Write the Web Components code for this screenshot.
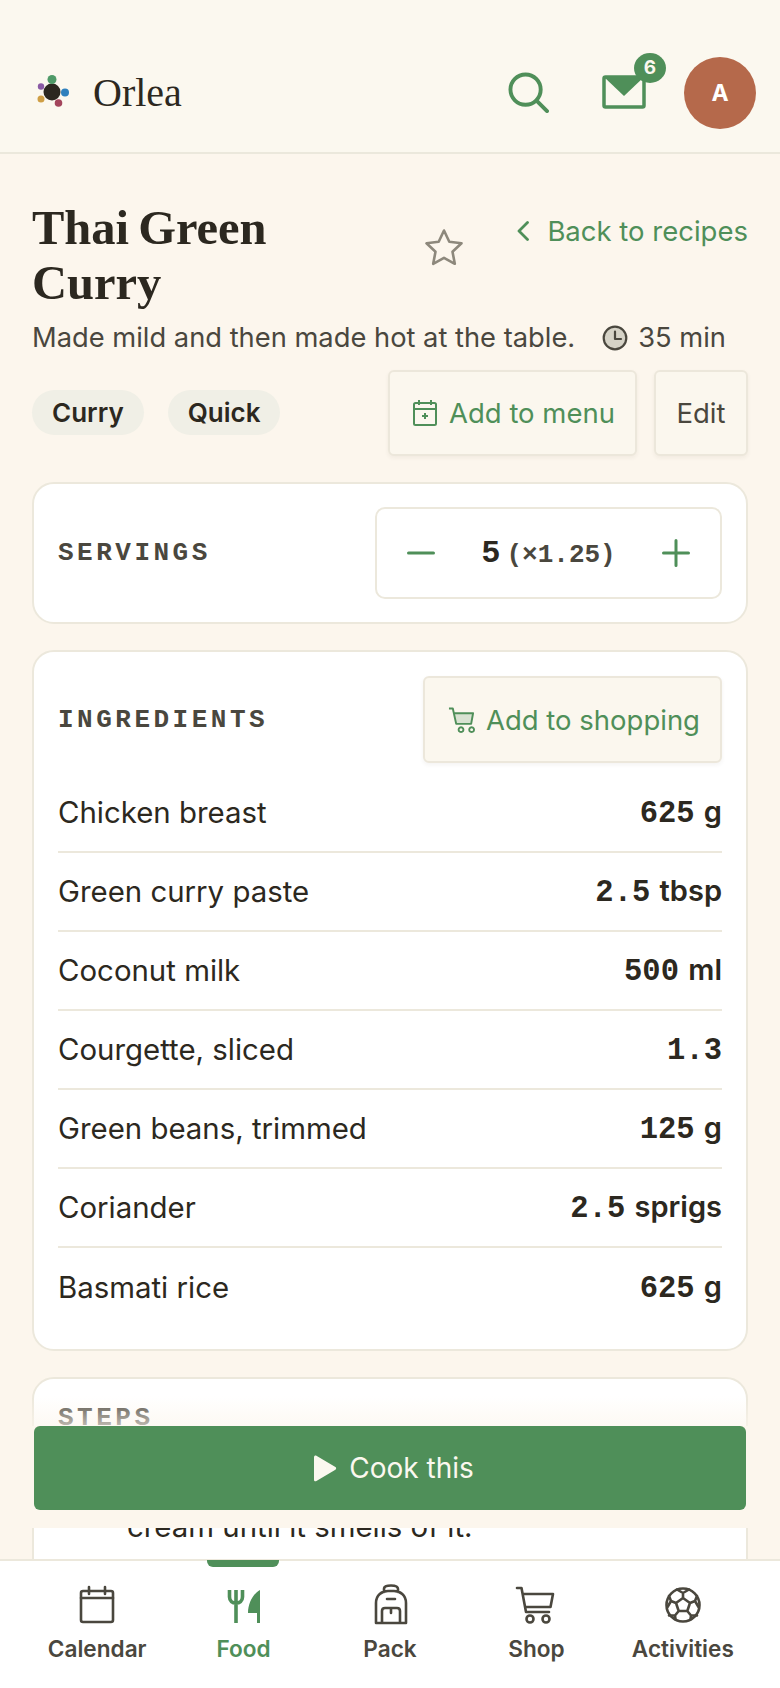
<!DOCTYPE html>
<html lang="en">
<head>
<meta charset="utf-8">
<title>Orlea</title>
<style>
  html, body { margin: 0; height: 100%; background: #fcf6ed; }
  body { font-family: Inter, "Liberation Sans", sans-serif; color: #2c2820; overflow: hidden; }
</style>
</head>
<body>
<orlea-app>
  <orlea-header slot="header"></orlea-header>
  <recipe-head slot="main"></recipe-head>
  <servings-card slot="main"></servings-card>
  <ingredients-card slot="main">
    <ingredient-row name="Chicken breast"><b>625</b> g</ingredient-row>
    <ingredient-row name="Green curry paste"><b>2.5</b> tbsp</ingredient-row>
    <ingredient-row name="Coconut milk"><b>500</b> ml</ingredient-row>
    <ingredient-row name="Courgette, sliced"><b>1.3</b></ingredient-row>
    <ingredient-row name="Green beans, trimmed"><b>125</b> g</ingredient-row>
    <ingredient-row name="Coriander"><b>2.5</b> sprigs</ingredient-row>
    <ingredient-row name="Basmati rice" last><b>625</b> g</ingredient-row>
  </ingredients-card>
  <steps-card slot="main"></steps-card>
  <cook-bar slot="overlay"></cook-bar>
  <bottom-nav slot="nav"></bottom-nav>
</orlea-app>

<script>
const MONO = '"Liberation Mono", monospace'
const SERIF = '"Liberation Serif", serif'

class OrleaApp extends HTMLElement {
    constructor() {
        super()
        this.attachShadow({ mode: 'open' })
        this.shadowRoot.innerHTML = `
        <style>
            :host { display: flex; flex-direction: column; height: 1688px; position: relative; overflow: hidden; }
            main { flex: 1; min-height: 0; overflow: hidden; padding: 0 32px; display: flex; flex-direction: column; gap: 26px; }
        </style>
        <slot name="header"></slot>
        <main><slot name="main"></slot></main>
        <slot name="overlay"></slot>
        <slot name="nav"></slot>
        `
    }
}

class OrleaHeader extends HTMLElement {
    constructor() {
        super()
        this.attachShadow({ mode: 'open' })
        this.shadowRoot.innerHTML = `
        <style>
            :host { display: flex; align-items: center; height: 154px; box-sizing: border-box; padding: 33px 24px 0 36px; background: #fbf8ef; border-bottom: 2px solid #ebe8dc; }
            .logo { display: flex; align-items: center; gap: 21px; flex: 1; }
            .name { font: 400 40px ${SERIF}; color: #2c2820; }
            .search { margin-right: 53px; display: block; }
            .mail { position: relative; width: 44px; height: 36px; margin-right: 38px; }
            .mail svg { display: block; }
            .badge { position: absolute; top: -22px; right: -20px; width: 32px; height: 30px; border-radius: 50%; background: #4f8f59; color: #fbf8ef; font: 700 19px Inter, sans-serif; display: flex; align-items: center; justify-content: center; }
            .avatar { width: 72px; height: 72px; border-radius: 50%; background: #b5694b; color: #fff; font: 700 23px Inter, sans-serif; display: flex; align-items: center; justify-content: center; }
        </style>
        <div class="logo">
            <svg width="36" height="36" viewBox="0 0 36 36">
                <circle cx="16" cy="17" r="8.5" fill="#2c2820"/>
                <circle cx="16" cy="4.5" r="4.5" fill="#4f9a68"/>
                <circle cx="29" cy="17.5" r="4" fill="#2f80bd"/>
                <circle cx="22.5" cy="28" r="3.8" fill="#a3455c"/>
                <circle cx="5" cy="24" r="3.5" fill="#cf9f45"/>
                <circle cx="5" cy="11.5" r="3.2" fill="#8a5aa5"/>
            </svg>
            <span class="name">Orlea</span>
        </div>
        <svg class="search" width="41" height="41" viewBox="0 0 42 42" fill="none" stroke="#4f8f59" stroke-width="4" stroke-linecap="round">
            <circle cx="18" cy="18" r="15.5"/><path d="M30 30l10 10"/>
        </svg>
        <div class="mail">
            <svg width="44" height="34" viewBox="0 0 44 34">
                <rect x="2" y="2" width="40" height="30" rx="1.5" fill="none" stroke="#4f8f59" stroke-width="3.5"/>
                <path d="M2 2h40L22 21z" fill="#4f8f59"/>
            </svg>
            <span class="badge">6</span>
        </div>
        <div class="avatar">A</div>
        `
    }
}

class RecipeHead extends HTMLElement {
    constructor() {
        super()
        this.attachShadow({ mode: 'open' })
        this.shadowRoot.innerHTML = `
        <style>
            :host { display: block; padding-top: 46px; flex: none; }
            .top { display: flex; align-items: flex-start; }
            h1 { margin: 0; width: 300px; font: 700 48.5px/55px ${SERIF}; color: #2c2820; word-spacing: -3px; }
            .star { margin: 28px 0 0 92px; display: block; }
            .back { margin-left: auto; margin-top: 14px; display: flex; align-items: center; gap: 18px; color: #4f8f59; font-size: 27.5px; line-height: 34px; }
            .sub { display: flex; align-items: center; justify-content: space-between; padding-right: 22px; font-size: 27.3px; line-height: 36px; color: #4a473e; margin-top: 10px; }
            .time { display: flex; align-items: center; gap: 10px; }
            .actions { display: flex; align-items: center; margin-top: 14px; }
            .chip { display: inline-flex; align-items: center; height: 45px; padding: 0 20px; border-radius: 23px; background: #f0efe6; font-size: 26px; font-weight: 600; color: #2c2820; margin: 0 24px 2px 0; }
            .btn { display: inline-flex; align-items: center; gap: 12px; height: 86px; box-sizing: border-box; border: 2px solid #ece7db; border-radius: 6px; background: #fbf7ee; box-shadow: 0 2px 4px rgba(60,50,30,.06); font-size: 27.5px; }
            .btn.green { color: #4f8f59; margin-left: auto; margin-right: 17px; padding: 0 20px 0 23px; }
            .btn.plain { color: #4a473e; padding: 0 20.5px; }
        </style>
        <div class="top">
            <h1>Thai Green Curry</h1>
            <svg class="star" width="40" height="38" viewBox="0 0 40 38" fill="none" stroke="#8d887c" stroke-width="2.6" stroke-linejoin="round">
                <path d="M20 2.5l5.3 11.2 12.2 1.600-9 8.400 2.300 12.100L20 29.900 9.200 35.800l2.300-12.100-9-8.400 12.200-1.600z"/>
            </svg>
            <div class="back">
                <svg width="12" height="20" viewBox="0 0 12 20" fill="none" stroke="#4f8f59" stroke-width="2.8" stroke-linecap="round" stroke-linejoin="round"><path d="M10.5 1.5L2 10l8.5 8.5"/></svg>
                <span>Back to recipes</span>
            </div>
        </div>
        <div class="sub">
            <span>Made mild and then made hot at the table.</span>
            <span class="time">
                <svg width="26" height="26" viewBox="0 0 26 26"><circle cx="13" cy="13" r="11.3" fill="#d6d3c7" stroke="#4a473e" stroke-width="2.2"/><path d="M13 6.500V14h6" fill="none" stroke="#4a473e" stroke-width="2.2" stroke-linecap="round" stroke-linejoin="round"/></svg>
                35 min
            </span>
        </div>
        <div class="actions">
            <span class="chip">Curry</span>
            <span class="chip">Quick</span>
            <span class="btn green">
                <svg width="24" height="26" viewBox="0 0 24 26" fill="none" stroke="#4f8f59" stroke-width="2"><rect x="1" y="3" width="22" height="22" rx="1.5"/><path d="M1 9h22M6 0v5M18 0v5M12 13v6M9 16h6"/></svg>
                Add to menu
            </span>
            <span class="btn plain">Edit</span>
        </div>
        `
    }
}

class ServingsCard extends HTMLElement {
    constructor() {
        super()
        this.attachShadow({ mode: 'open' })
        this.shadowRoot.innerHTML = `
        <style>
            :host { display: flex; align-items: center; justify-content: space-between; box-sizing: border-box; height: 142px; padding: 0 24px; background: #fff; border: 2px solid #ece8dc; border-radius: 22px; flex: none; }
            .label { font: 700 26px ${MONO}; letter-spacing: 3.5px; color: #4a473e; }
            .stepper { display: flex; align-items: center; justify-content: space-between; width: 347px; height: 92px; box-sizing: border-box; padding: 0 30px; border: 2px solid #ece8dc; border-radius: 10px; }
            svg { display: block; }
            .val { display: flex; align-items: baseline; gap: 6px; font: 700 32px ${MONO}; color: #2c2820; white-space: nowrap; }
            .val small { font-size: 26px; color: #4a473e; }
        </style>
        <span class="label">SERVINGS</span>
        <div class="stepper">
            <svg width="28" height="28" viewBox="0 0 28 28" stroke="#4f8f59" stroke-width="3" stroke-linecap="round"><path d="M1.5 14h25"/></svg>
            <span class="val"><span>5</span><small>(×1.25)</small></span>
            <svg width="28" height="28" viewBox="0 0 28 28" stroke="#4f8f59" stroke-width="3" stroke-linecap="round"><path d="M1.5 14h25M14 1.500v25"/></svg>
        </div>
        `
    }
}

class IngredientsCard extends HTMLElement {
    constructor() {
        super()
        this.attachShadow({ mode: 'open' })
        this.shadowRoot.innerHTML = `
        <style>
            :host { display: block; box-sizing: border-box; height: 701px; padding: 24px 24px 0; background: #fff; border: 2px solid #ece8dc; border-radius: 22px; flex: none; }
            .head { display: flex; align-items: center; justify-content: space-between; margin-bottom: 11px; }
            .label { font: 700 26px ${MONO}; letter-spacing: 3.5px; color: #4a473e; }
            .btn { display: inline-flex; align-items: center; gap: 11px; height: 87px; box-sizing: border-box; padding: 0 20px 0 23px; border: 2px solid #ece7db; border-radius: 6px; background: #fbf7ee; box-shadow: 0 2px 4px rgba(60,50,30,.06); font-size: 27.5px; color: #4f8f59; }
        </style>
        <div class="head">
            <span class="label">INGREDIENTS</span>
            <span class="btn">
                <svg width="27" height="28" viewBox="0 0 28 28"><path d="M6 7h20l-2.500 11H8z" fill="#d9e2d2"/><path d="M1 2h4l3.500 16h15.500L26 7H6M11 24a2.500 2.500 0 1 0 0-.01zM22 24a2.500 2.500 0 1 0 0-.01z" fill="none" stroke="#4f8f59" stroke-width="2" stroke-linejoin="round"/></svg>
                Add to shopping
            </span>
        </div>
        <slot></slot>
        `
    }
}

class IngredientRow extends HTMLElement {
    constructor() {
        super()
        this.attachShadow({ mode: 'open' })
        this.shadowRoot.innerHTML = `
        <style>
            :host { display: flex; align-items: center; justify-content: space-between; height: 79px; box-sizing: border-box; border-bottom: 2px solid #ece8dc; font-size: 29.4px; color: #2c2820; }
            :host([last]) { border-bottom: none; }
            .qty { font-weight: 600; white-space: nowrap; font-size: 29px; word-spacing: 2px; }
            ::slotted(b) { font-family: ${MONO}; font-weight: 700; font-size: 30.5px; }
        </style>
        <span>${this.getAttribute('name')}</span>
        <span class="qty"><slot></slot></span>
        `
    }
}

class StepsCard extends HTMLElement {
    constructor() {
        super()
        this.attachShadow({ mode: 'open' })
        this.shadowRoot.innerHTML = `
        <style>
            :host { display: block; box-sizing: border-box; height: 400px; padding: 24px 24px 0; background: #fff; border: 2px solid #ece8dc; border-radius: 22px; flex: none; }
            .label { display: block; font: 700 26px ${MONO}; letter-spacing: 3.5px; color: #4a473e; }
            ol { list-style: none; margin: 20px 0 0; padding: 0 0 0 69px; font-size: 29.4px; line-height: 40px; color: #2c2820; }
            li { padding-top: 54px; }
        </style>
        <span class="label">STEPS</span>
        <ol><li>cream until it smells of it.</li></ol>
        `
    }
}

class CookBar extends HTMLElement {
    constructor() {
        super()
        this.attachShadow({ mode: 'open' })
        this.shadowRoot.innerHTML = `
        <style>
            :host { position: absolute; left: 34px; right: 34px; top: 1396px; display: block; }
            .wrap { padding: 30px 2px 18px; background: linear-gradient(to bottom, rgba(252,246,237,0) 0, rgba(252,246,237,.65) 30px, #fcf6ed 30px); margin: 0 -2px; }
            button { display: flex; align-items: center; justify-content: center; gap: 12px; width: 100%; height: 84px; border: none; border-radius: 6px; background: #4f8f59; color: #fbf8ef; font: 400 28px Inter, sans-serif; padding: 0 0 0 7px; }
        </style>
        <div class="wrap">
            <button>
                <svg width="24" height="27" viewBox="0 0 24 27" fill="#fbf8ef"><path d="M1 2.200c0-1.300 1.300-2 2.400-1.400l19 11.300c1 .6 1 2 0 2.600l-19 11.300C2.300 26.700 1 26 1 24.700z"/></svg>
                Cook this
            </button>
        </div>
        `
    }
}

const NAV_ICONS = {
    calendar: `<rect x="2" y="4" width="32" height="31" rx="2"/><path d="M2 11h32M10 0v7M26 0v7"/>`,
    food: `<path d="M3.500 3v7c0 4 3 6 6.500 6s6.500-2 6.500-6V3M10 3v33" stroke-width="3.600" stroke-linecap="butt"/><path d="M34 3v33h-3V26h-9c0-10 5-19 12-23z" fill="currentColor" stroke="none"/>`,
    pack: `<path d="M4 36V16C4 8 10 4 16 4h6c6 0 12 4 12 12v20zM12 5V2c0-3 3-3.500 7-3.500s7 .5 7 3.500v3M15 12h8M10 36V24c0-2 1-3 3-3h12c2 0 3 1 3 3v12M19 21v5"/>`,
    shop: `<path d="M-1 1h4.500L8 25h23M5 7h30l-2.500 13H7"/><circle cx="12" cy="32" r="3.500"/><circle cx="28" cy="32" r="3.500"/>`,
    ball: `<circle cx="18" cy="18" r="16.500"/><path d="M18 11l7 5-2.700 8h-8.600L11 16zM18 11V6M12 2.500L18 6l6-3.500M25 16l5-2 2-5M30 14l3.500 6M22.300 24l3.700 4.500-.5 4M13.700 24L10 28.500l.5 4M11 16l-5-2-2-5M6 14l-3.500 6M10 28.500H4M26 28.500h6"/>`
}

class NavItem extends HTMLElement {
    constructor() {
        super()
        this.attachShadow({ mode: 'open' })
        const active = this.hasAttribute('active')
        this.shadowRoot.innerHTML = `
        <style>
            :host { display: flex; flex-direction: column; align-items: center; flex: 1; position: relative; padding-top: 26px; font-size: 22.6px; font-weight: 600; line-height: 30px; color: ${active ? '#4f8f59' : '#4a473e'}; }
            svg { display: block; margin-bottom: 11px; overflow: visible; }
            .bar { position: absolute; top: -1px; left: 37px; width: 72px; height: 7px; background: #4f8f59; border-radius: 0 0 6px 6px; }
        </style>
        ${active ? '<span class="bar"></span>' : ''}
        <svg width="36" height="36" viewBox="0 0 36 36" fill="none" stroke="currentColor" stroke-width="2.600" stroke-linecap="round" stroke-linejoin="round">${NAV_ICONS[this.getAttribute('icon')]}</svg>
        <span>${this.getAttribute('label')}</span>
        `
    }
}

class BottomNav extends HTMLElement {
    constructor() {
        super()
        this.attachShadow({ mode: 'open' })
        this.shadowRoot.innerHTML = `
        <style>
            :host { display: flex; flex: none; height: 129px; box-sizing: border-box; padding: 0 24px; background: #fff; border-top: 2px solid #ece8dc; position: relative; }
        </style>
        <nav-item icon="calendar" label="Calendar"></nav-item>
        <nav-item icon="food" label="Food" active></nav-item>
        <nav-item icon="pack" label="Pack"></nav-item>
        <nav-item icon="shop" label="Shop"></nav-item>
        <nav-item icon="ball" label="Activities"></nav-item>
        `
    }
}

customElements.define('nav-item', NavItem)
customElements.define('orlea-app', OrleaApp)
customElements.define('orlea-header', OrleaHeader)
customElements.define('recipe-head', RecipeHead)
customElements.define('servings-card', ServingsCard)
customElements.define('ingredients-card', IngredientsCard)
customElements.define('ingredient-row', IngredientRow)
customElements.define('steps-card', StepsCard)
customElements.define('cook-bar', CookBar)
customElements.define('bottom-nav', BottomNav)
</script>
</body>
</html>
